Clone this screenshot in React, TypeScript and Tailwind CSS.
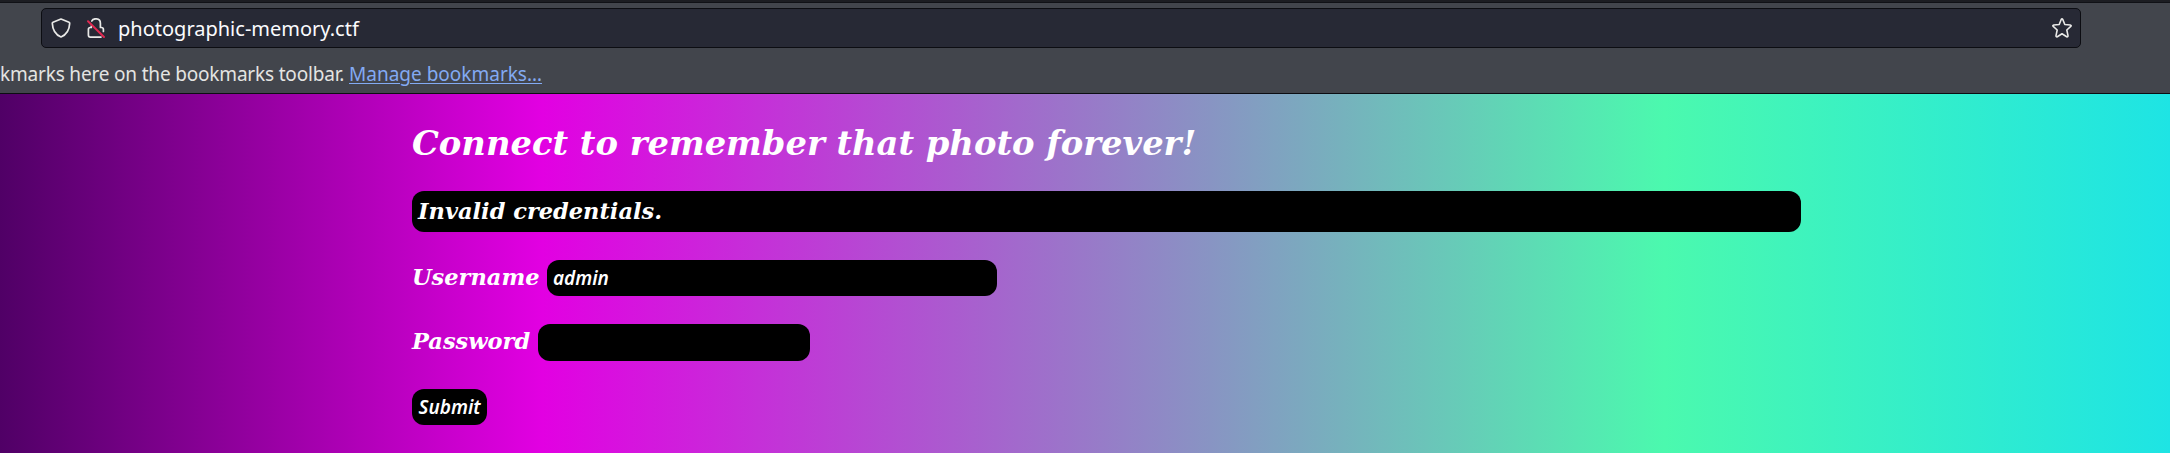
import React from "react";

function ShieldIcon() {
  return (
    <svg className="h-5 w-5" viewBox="0 0 20 20" fill="none" stroke="#e9e9e7" strokeWidth="1.7" strokeLinejoin="round">
      <path d="M10 1 L18 4.2 Q18.8 4.5 18.7 5.4 C18.4 11.5 16 16.5 10 19 C4 16.5 1.6 11.5 1.3 5.4 Q1.2 4.5 2 4.2 Z" />
    </svg>
  );
}

function InsecureLockIcon() {
  return (
    <svg className="h-5 w-[18px]" viewBox="0 0 18 20" fill="none" strokeLinecap="round" strokeLinejoin="round">
      <path d="M4.8 3 C6 -.1 13.4 -.2 13.4 5.2 V9.5 H14.3 Q16.4 9.5 16.4 11.5 V13.5 M4.3 8.2 V9.5 H3.4 Q1.4 9.5 1.4 11.5 V17 Q1.4 19.1 3.4 19.1 H14" stroke="#e9e9e7" strokeWidth="1.7" />
      <path d="M1 3.2 L17 19" stroke="#e22850" strokeWidth="1.9" />
    </svg>
  );
}

function StarIcon() {
  return (
    <svg className="h-5 w-5" viewBox="0 0 20 20" fill="none" stroke="#e9e9e7" strokeWidth="1.6" strokeLinejoin="round">
      <path d="M9.2 1.5 Q10 .3 10.8 1.5 L12.8 6.5 L18.3 7 Q19.7 7.3 18.8 8.4 L14.8 12 L16 17.7 Q16 19.2 14.7 18.7 L10 15.8 L5.3 18.7 Q4 19.2 4 17.7 L5.2 12 L1.2 8.4 Q.3 7.3 1.7 7 L7.2 6.5 Z" />
    </svg>
  );
}

export default function App() {
  return (
    <div className="flex h-[453px] w-[2170px] flex-col overflow-hidden bg-[#42454c] font-['Noto_Sans',sans-serif] text-[#fbfbfe]">
      <header className="h-[94px] shrink-0 border-b border-[#0c0d12] whitespace-nowrap">
        <div className="h-[3px] border-b border-[#101116] bg-[#1c1d22]" />
        <div className="mt-[5px] ml-[41px] flex h-10 w-[2040px] items-center rounded-[5px] border border-[#0c0d12] bg-[#272935] pr-[8px] pl-[9px]">
          <ShieldIcon />
          <span className="ml-[16px] flex"><InsecureLockIcon /></span>
          <span className="ml-[13px] flex-1 pt-[2px] text-[20px] leading-[28px]">photographic-memory.ctf</span>
          <StarIcon />
        </div>
        <p className="mt-[12px] text-[19px] leading-[28px] text-[#e4e4e2]">
          <span className="tracking-[-0.18px]">kmarks here on the bookmarks toolbar. </span>
          <a className="text-[#83aaf3] underline decoration-1 underline-offset-[2px]">Manage bookmarks…</a>
        </p>
      </header>
      <main className="flex-1 bg-[linear-gradient(90deg,#500066_0%,#e200e2_25%,#4bf9ae_76.7%,#1ee4e4_100%)] pl-[412px] font-['DejaVu_Serif',serif] font-bold italic text-white">
        <h1 className="pt-[29px] text-[33.75px] leading-[40px] whitespace-nowrap">Connect to remember that photo forever!</h1>
        <div className="mt-[28px] flex h-[41px] w-[1389px] items-center rounded-[12px] bg-black pl-[6px] text-[22.5px]">Invalid credentials.</div>
        <form className="text-[22.5px]">
          <div className="mt-[28px] flex h-9 items-center">
            <label className="w-[135px]">Username</label>
            <input defaultValue="admin" className="h-9 w-[450px] rounded-[12px] bg-black px-[6px] font-['Noto_Sans',sans-serif] text-[19px] font-semibold" />
          </div>
          <div className="mt-[28px] flex h-[37px] items-center">
            <label className="w-[126px] pb-[2px]">Password</label>
            <input type="password" className="h-[37px] w-[272px] rounded-[12px] bg-black px-[6px]" />
          </div>
          <button type="button" className="mt-[28px] block h-9 w-[75px] rounded-[12px] bg-black font-['Noto_Sans',sans-serif] text-[19px] font-semibold italic">Submit</button>
        </form>
      </main>
    </div>
  );
}
